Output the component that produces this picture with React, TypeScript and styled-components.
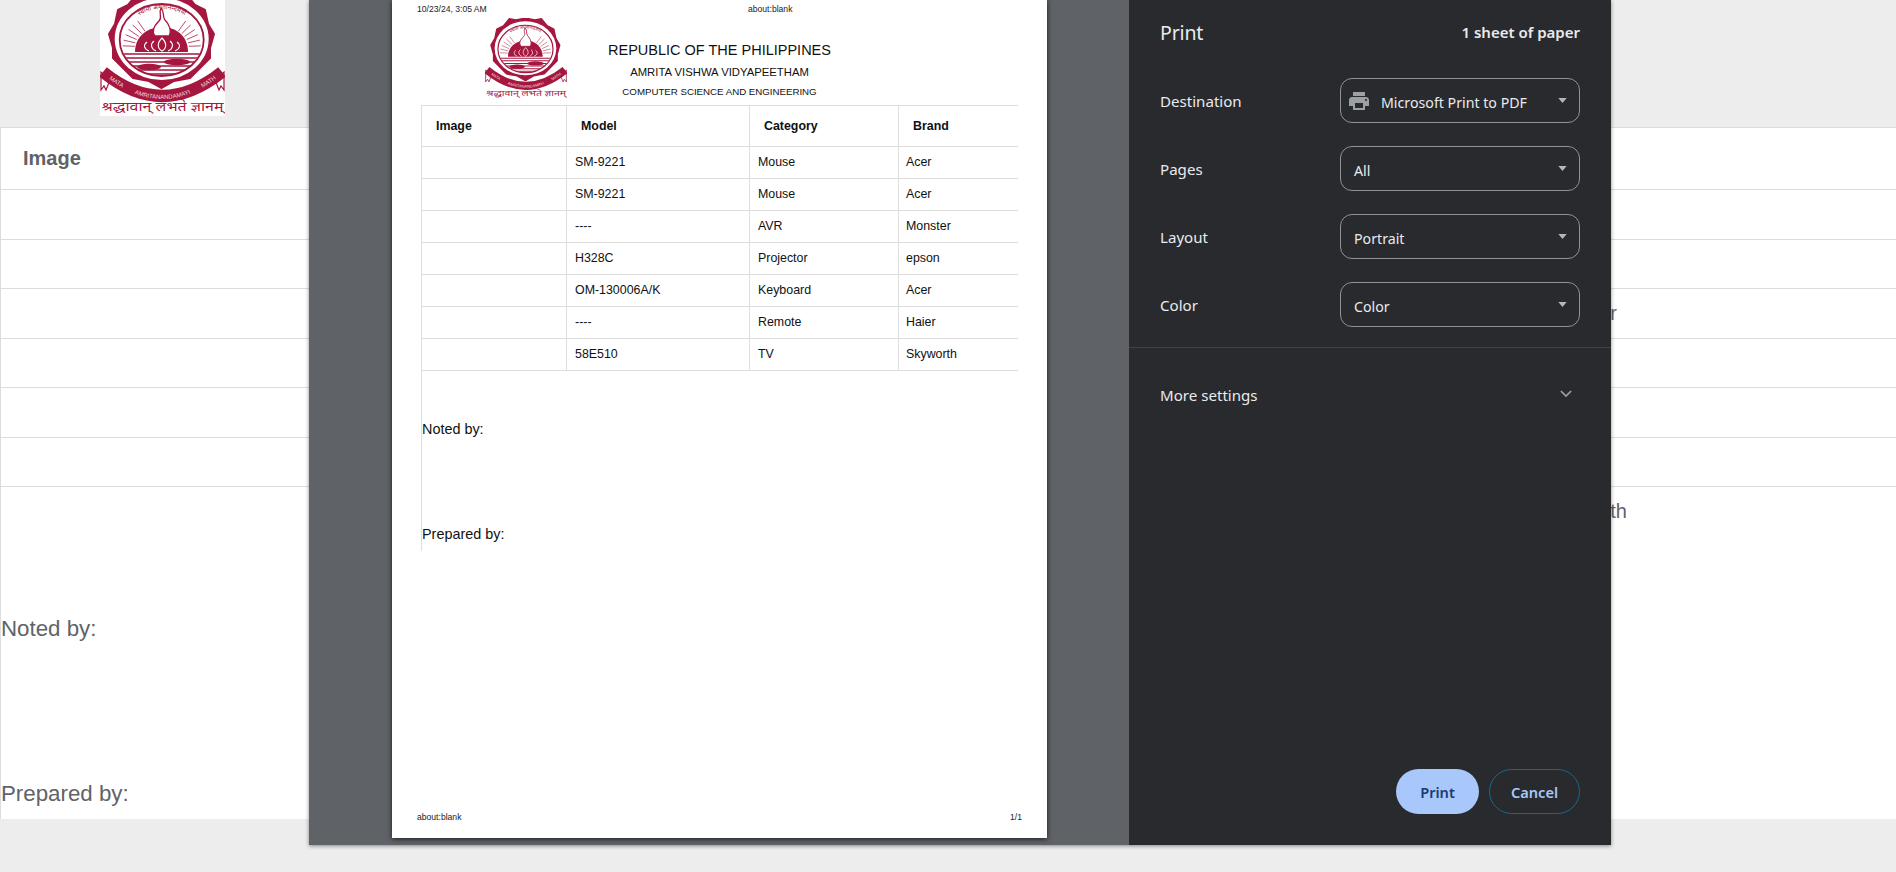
import React from "react";
import styled, { createGlobalStyle } from "styled-components";

const GlobalStyle = createGlobalStyle`
  html, body {
    margin: 0;
    padding: 0;
    background: #ededed;
    font-family: "Liberation Sans", Arial, sans-serif;
    overflow: hidden;
  }
`;

const Screen = styled.div`
  position: relative;
  width: 1896px;
  height: 872px;
  overflow: hidden;
`;

/* page behind the print dialog */
const SiteHead = styled.header`
  height: 127px;
  padding-left: 100px;
  box-sizing: border-box;
`;

const SiteLogo = styled.svg`
  display: block;
  width: 125px;
  height: 116px;
  background: #fff;
`;

const SiteTable = styled.div`
  background: #fff;
  border-top: 1px solid #dcdcdc;
  border-left: 1px solid #dcdcdc;
  color: #5f6368;
`;

const SiteRow = styled.div<{ $h: number }>`
  display: flex;
  align-items: center;
  box-sizing: border-box;
  height: ${(p) => p.$h}px;
  border-bottom: 1px solid #dcdcdc;
`;

const SiteHeading = styled.div`
  padding-left: 22px;
  font-size: 20px;
  font-weight: 700;
`;

const TrailingCell = styled.div<{ $end: number }>`
  width: ${(p) => p.$end}px;
  text-align: right;
  font-size: 20px;
  white-space: nowrap;
`;

const LastRow = styled.div`
  height: 332px;
  box-sizing: border-box;
  padding-top: 13px;
`;

const SignLine = styled.div<{ $gap: number }>`
  margin-top: ${(p) => p.$gap}px;
  font-size: 22.3px;
  line-height: 26px;
`;

/* print dialog */
const Dialog = styled.div`
  position: absolute;
  top: 0;
  left: 309px;
  width: 1302px;
  height: 845px;
  display: flex;
  box-shadow: 0 1px 4px rgba(0, 0, 0, 0.45);
`;

const Preview = styled.div`
  flex: 1;
  background: #5f6368;
  padding-left: 83px;
`;

const Sheet = styled.div`
  width: 655px;
  height: 838px;
  box-sizing: border-box;
  padding: 0 25px 0;
  display: flex;
  flex-direction: column;
  background: #fff;
  color: #111;
  box-shadow: 0 1px 5px rgba(0, 0, 0, 0.75);
`;

const RunningHead = styled.div`
  display: flex;
  height: 18px;
  align-items: center;
  font-size: 8.6px;
  color: #222;
`;

const RunningDate = styled.span`
  width: 331px;
`;

const Letterhead = styled.div`
  display: flex;
  height: 87px;
  padding-left: 68px;
`;

const SheetLogo = styled.svg`
  display: block;
  flex: none;
  width: 82px;
  height: 81px;
`;

const Titles = styled.div`
  width: 305px;
  padding-top: 21px;
  text-align: center;
  white-space: nowrap;
`;

const TitleLine = styled.div<{ $size: number; $lh: number }>`
  font-size: ${(p) => p.$size}px;
  line-height: ${(p) => p.$lh}px;
`;

const SheetBody = styled.div`
  margin-left: 4px;
  width: 596px;
`;

const SheetTable = styled.table`
  border-collapse: collapse;
  table-layout: fixed;
  width: 596px;
  font-size: 12.4px;
  border-top: 1px solid #dedede;
`;

const HeadCell = styled.th<{ $w: number }>`
  width: ${(p) => p.$w}px;
  height: 41px;
  padding: 0 0 0 14px;
  box-sizing: border-box;
  text-align: left;
  font-weight: 700;
  border: 1px solid #dedede;
  border-top: 0;
  &:last-child {
    border-right: 0;
  }
`;

const BodyCell = styled.td`
  height: 32px;
  padding: 0 0 2px 8px;
  box-sizing: border-box;
  border: 1px solid #dedede;
  &:last-child {
    border-right: 0;
    padding-left: 7px;
  }
`;

const Notes = styled.div`
  height: 180px;
  border-left: 1px solid #dedede;
  font-size: 14.4px;
  line-height: 18px;
`;

const NoteLine = styled.div<{ $gap: number }>`
  padding-top: ${(p) => p.$gap}px;
`;

const RunningFoot = styled.div`
  margin-top: auto;
  height: 42px;
  display: flex;
  justify-content: space-between;
  align-items: center;
  font-size: 8.6px;
  color: #222;
`;

const Sidebar = styled.aside`
  width: 482px;
  flex: none;
  display: flex;
  flex-direction: column;
  box-sizing: border-box;
  background: #292a2d;
  color: #e8eaed;
  font-family: "Noto Sans", "Open Sans", sans-serif;
  font-size: 14.2px;
`;

const SideTitleBar = styled.div`
  height: 64px;
  padding: 0 31px;
  display: flex;
  align-items: center;
  justify-content: space-between;
`;

const SideTitle = styled.h1`
  margin: 0;
  font-size: 19.6px;
  font-weight: 400;
  letter-spacing: -0.2px;
`;

const SheetCount = styled.span`
  font-size: 15px;
  font-weight: 600;
`;

const Settings = styled.div`
  display: flex;
  flex-direction: column;
  gap: 23px;
  padding: 14px 31px 0;
  height: 284px;
  box-sizing: border-box;
  border-bottom: 1px solid #3f4144;
`;

const SettingRow = styled.div`
  display: flex;
  align-items: center;
  justify-content: space-between;
  height: 45px;
`;

const SettingLabel = styled.span`
  padding-top: 1px;
  font-size: 15.1px;
`;

const SelectBox = styled.div`
  width: 240px;
  height: 45px;
  box-sizing: border-box;
  padding: 3px 12px 0 13px;
  display: flex;
  align-items: center;
  gap: 10px;
  border: 1px solid #8f9297;
  border-radius: 12px;
`;

const SelectValue = styled.span`
  flex: 1;
  white-space: nowrap;
`;

const PrinterIcon = styled.svg`
  width: 24px;
  height: 24px;
  margin: -3px 0 0 -7px;
  fill: #9aa0a6;
  flex: none;
`;

const Caret = styled.svg`
  width: 9px;
  height: 5px;
  margin-top: -4px;
  fill: #b4b7bc;
  flex: none;
`;

const MoreRow = styled.div`
  height: 93px;
  padding: 0 31px;
  box-sizing: border-box;
  display: flex;
  align-items: center;
  justify-content: space-between;
`;

const Chevron = styled.svg`
  width: 12px;
  height: 8px;
  margin-right: 8px;
  margin-top: -1px;
  fill: none;
  stroke: #9aa0a6;
  stroke-width: 2;
`;

const Actions = styled.div`
  margin-top: auto;
  padding: 0 31px 31px;
  display: flex;
  justify-content: flex-end;
  gap: 10px;
`;

const ActionButton = styled.button<{ $primary?: boolean }>`
  height: 45px;
  width: ${(p) => (p.$primary ? 83 : 91)}px;
  padding: 1px 0 0;
  box-sizing: border-box;
  border-radius: 23px;
  font-family: "Noto Sans", "Open Sans", sans-serif;
  font-size: 14.6px;
  font-weight: 600;
  background: ${(p) => (p.$primary ? "#a8c7fa" : "transparent")};
  color: ${(p) => (p.$primary ? "#1c3a73" : "#a8c7fa")};
  border: ${(p) => (p.$primary ? "0" : "1px solid #146a8c")};
`;

const CRIMSON = "#a5173f";

const arcTop = "M24 42 A38 33 0 0 1 100 42";

const Logo: React.FC<{ id: string }> = ({ id }) => (
  <>
    <defs>
      <clipPath id={`${id}-sea`}>
        <ellipse cx="61.7" cy="40" rx="41" ry="36" />
      </clipPath>
      <path id={`${id}-arc`} d={arcTop} />
      <path id={`${id}-ribbon`} d="M4 75 Q 62 123 121 75" />
    </defs>
    {/* scalloped seal */}
    <polygon
      points="61.7,-7 76,-4 86,-6 95,5 105,10 108,24 114,34 110,48 110,58 98,70 90,78 74,81 61.7,88 49,81 33,78 25,70 13,58 13,48 9,34 15,24 18,10 28,5 37,-6 47,-4"
      fill={CRIMSON}
      stroke={CRIMSON}
      strokeWidth="2"
      strokeLinejoin="round"
    />
    <ellipse cx="61.7" cy="39" rx="47" ry="41" fill="#fff" />
    <ellipse cx="61.7" cy="40" rx="42" ry="36" fill="none" stroke={CRIMSON} strokeWidth="1.8" />
    <text fontSize="6.5" fill={CRIMSON} fontFamily="'Noto Sans Devanagari', 'Noto Sans', sans-serif">
      <textPath href={`#${id}-arc`} startOffset="50%" textAnchor="middle">
        स्वामी अमृतानन्दमयी
      </textPath>
    </text>
    {/* rays */}
    <g stroke={CRIMSON} strokeWidth="0.9" opacity="0.85">
      {[-88, -78, -68, -58, -48, -38, 38, 48, 58, 68, 78, 88].map((a) => {
        const r = ((a - 90) * Math.PI) / 180;
        return (
          <line
            key={a}
            x1={61.7 + Math.cos(r) * 27}
            y1={47 + Math.sin(r) * 20}
            x2={61.7 + Math.cos(r) * 39}
            y2={47 + Math.sin(r) * 33}
          />
        );
      })}
    </g>
    {/* dome with lotus */}
    <path d="M35 52 C35 36 48 27 62 27 C76 27 88 36 88 52 Z" fill={CRIMSON} />
    <path
      d="M61 8 C58 14 63 17 59 21 C54 26 51 31 55 36 L69 36 C72 31 69 24 65 20 C62 16 65 12 61 8 Z"
      fill="#fff"
      stroke={CRIMSON}
      strokeWidth="1.3"
    />
    <g fill="none" stroke="#fff" strokeWidth="1.1">
      <path d="M62 38 C57 43 57 48 62 51 C67 48 67 43 62 38 Z" />
      <path d="M54 41 C50 44 51 49 56 51 M70 41 C74 44 73 49 68 51" />
      <path d="M47 42 C43 45 44 49 49 51 M77 42 C81 45 80 49 75 51" />
    </g>
    {/* water */}
    <g clipPath={`url(#${id}-sea)`} stroke={CRIMSON} strokeWidth="1.6">
      {[54, 58, 62, 66, 70, 74].map((y) => (
        <line key={y} x1="15" x2="110" y1={y} y2={y} />
      ))}
    </g>
    <ellipse cx="49" cy="67" rx="12" ry="3.2" fill={CRIMSON} />
    <ellipse cx="77" cy="62" rx="13" ry="3.2" fill={CRIMSON} />
    {/* ribbon */}
    <path d="M1 90 L1 72 L10 80 L6 90 L4 86 Z M124 90 L124 72 L115 80 L119 90 L121 86 Z" fill="#fff" stroke={CRIMSON} strokeWidth="1.2" />
    <path d="M3 72 Q 62 120 122 72" fill="none" stroke={CRIMSON} strokeWidth="12" />
    <text fontSize="6" fill="#f3d7de" fontFamily="'Liberation Sans', Arial, sans-serif">
      <textPath href={`#${id}-ribbon`} startOffset="11%" textAnchor="middle">
        MATA
      </textPath>
      <textPath href={`#${id}-ribbon`} startOffset="50%" textAnchor="middle">
        AMRITANANDAMAYI
      </textPath>
      <textPath href={`#${id}-ribbon`} startOffset="89%" textAnchor="middle">
        MATH
      </textPath>
    </text>
    {/* motto */}
    <text
      x="62.5"
      y="111"
      textAnchor="middle"
      fontSize="12.5"
      textLength="122"
      lengthAdjust="spacingAndGlyphs"
      fill={CRIMSON}
      fontFamily="'Noto Sans Devanagari', 'Noto Sans', sans-serif"
    >
      श्रद्धावान् लभते ज्ञानम्
    </text>
  </>
);

const rows = [
  ["SM-9221", "Mouse", "Acer"],
  ["SM-9221", "Mouse", "Acer"],
  ["----", "AVR", "Monster"],
  ["H328C", "Projector", "epson"],
  ["OM-130006A/K", "Keyboard", "Acer"],
  ["----", "Remote", "Haier"],
  ["58E510", "TV", "Skyworth"],
];

const selects = [
  { label: "Pages", value: "All" },
  { label: "Layout", value: "Portrait" },
  { label: "Color", value: "Color" },
];

const CaretIcon = () => (
  <Caret viewBox="0 0 10 6">
    <path d="M0 0h10L5 6z" />
  </Caret>
);

export default function App() {
  return (
    <Screen>
      <GlobalStyle />
      <SiteHead>
        <SiteLogo viewBox="0 0 125 116">
          <Logo id="site" />
        </SiteLogo>
      </SiteHead>
      <SiteTable>
        <SiteRow $h={62}>
          <SiteHeading>Image</SiteHeading>
        </SiteRow>
        <SiteRow $h={50} />
        <SiteRow $h={49} />
        <SiteRow $h={50}>
          <TrailingCell $end={1616}>Monster</TrailingCell>
        </SiteRow>
        <SiteRow $h={49} />
        <SiteRow $h={50} />
        <SiteRow $h={49} />
        <LastRow>
          <TrailingCell $end={1626}>Skyworth</TrailingCell>
          <SignLine $gap={93}>Noted by:</SignLine>
          <SignLine $gap={139}>Prepared by:</SignLine>
        </LastRow>
      </SiteTable>

      <Dialog>
        <Preview>
          <Sheet>
            <RunningHead>
              <RunningDate>10/23/24, 3:05 AM</RunningDate>
              <span>about:blank</span>
            </RunningHead>
            <Letterhead>
              <SheetLogo viewBox="0 -7 125 123" preserveAspectRatio="none">
                <Logo id="sheet" />
              </SheetLogo>
              <Titles>
                <TitleLine $size={14.5} $lh={22}>REPUBLIC OF THE PHILIPPINES</TitleLine>
                <TitleLine $size={11.3} $lh={22}>AMRITA VISHWA VIDYAPEETHAM</TitleLine>
                <TitleLine $size={9.7} $lh={18}>COMPUTER SCIENCE AND ENGINEERING</TitleLine>
              </Titles>
            </Letterhead>
            <SheetBody>
              <SheetTable>
                <thead>
                  <tr>
                    <HeadCell $w={145}>Image</HeadCell>
                    <HeadCell $w={183}>Model</HeadCell>
                    <HeadCell $w={149}>Category</HeadCell>
                    <HeadCell $w={119}>Brand</HeadCell>
                  </tr>
                </thead>
                <tbody>
                  {rows.map((r, i) => (
                    <tr key={i}>
                      <BodyCell />
                      {r.map((c) => (
                        <BodyCell key={c}>{c}</BodyCell>
                      ))}
                    </tr>
                  ))}
                </tbody>
              </SheetTable>
              <Notes>
                <NoteLine $gap={49}>Noted by:</NoteLine>
                <NoteLine $gap={87}>Prepared by:</NoteLine>
              </Notes>
            </SheetBody>
            <RunningFoot>
              <span>about:blank</span>
              <span>1/1</span>
            </RunningFoot>
          </Sheet>
        </Preview>

        <Sidebar>
          <SideTitleBar>
            <SideTitle>Print</SideTitle>
            <SheetCount>1 sheet of paper</SheetCount>
          </SideTitleBar>
          <Settings>
            <SettingRow>
              <SettingLabel>Destination</SettingLabel>
              <SelectBox>
                <PrinterIcon viewBox="0 0 24 24">
                  <path d="M19 8H5c-1.66 0-3 1.34-3 3v6h4v4h12v-4h4v-6c0-1.66-1.34-3-3-3zm-3 11H8v-5h8v5zm3-7c-.55 0-1-.45-1-1s.45-1 1-1 1 .45 1 1-.45 1-1 1zm-1-9H6v4h12V3z" />
                </PrinterIcon>
                <SelectValue>Microsoft Print to PDF</SelectValue>
                <CaretIcon />
              </SelectBox>
            </SettingRow>
            {selects.map((s) => (
              <SettingRow key={s.label}>
                <SettingLabel>{s.label}</SettingLabel>
                <SelectBox>
                  <SelectValue>{s.value}</SelectValue>
                  <CaretIcon />
                </SelectBox>
              </SettingRow>
            ))}
          </Settings>
          <MoreRow>
            <SettingLabel>More settings</SettingLabel>
            <Chevron viewBox="0 0 14 9">
              <path d="M1 1l6 6 6-6" />
            </Chevron>
          </MoreRow>
          <Actions>
            <ActionButton $primary>Print</ActionButton>
            <ActionButton>Cancel</ActionButton>
          </Actions>
        </Sidebar>
      </Dialog>
    </Screen>
  );
}
